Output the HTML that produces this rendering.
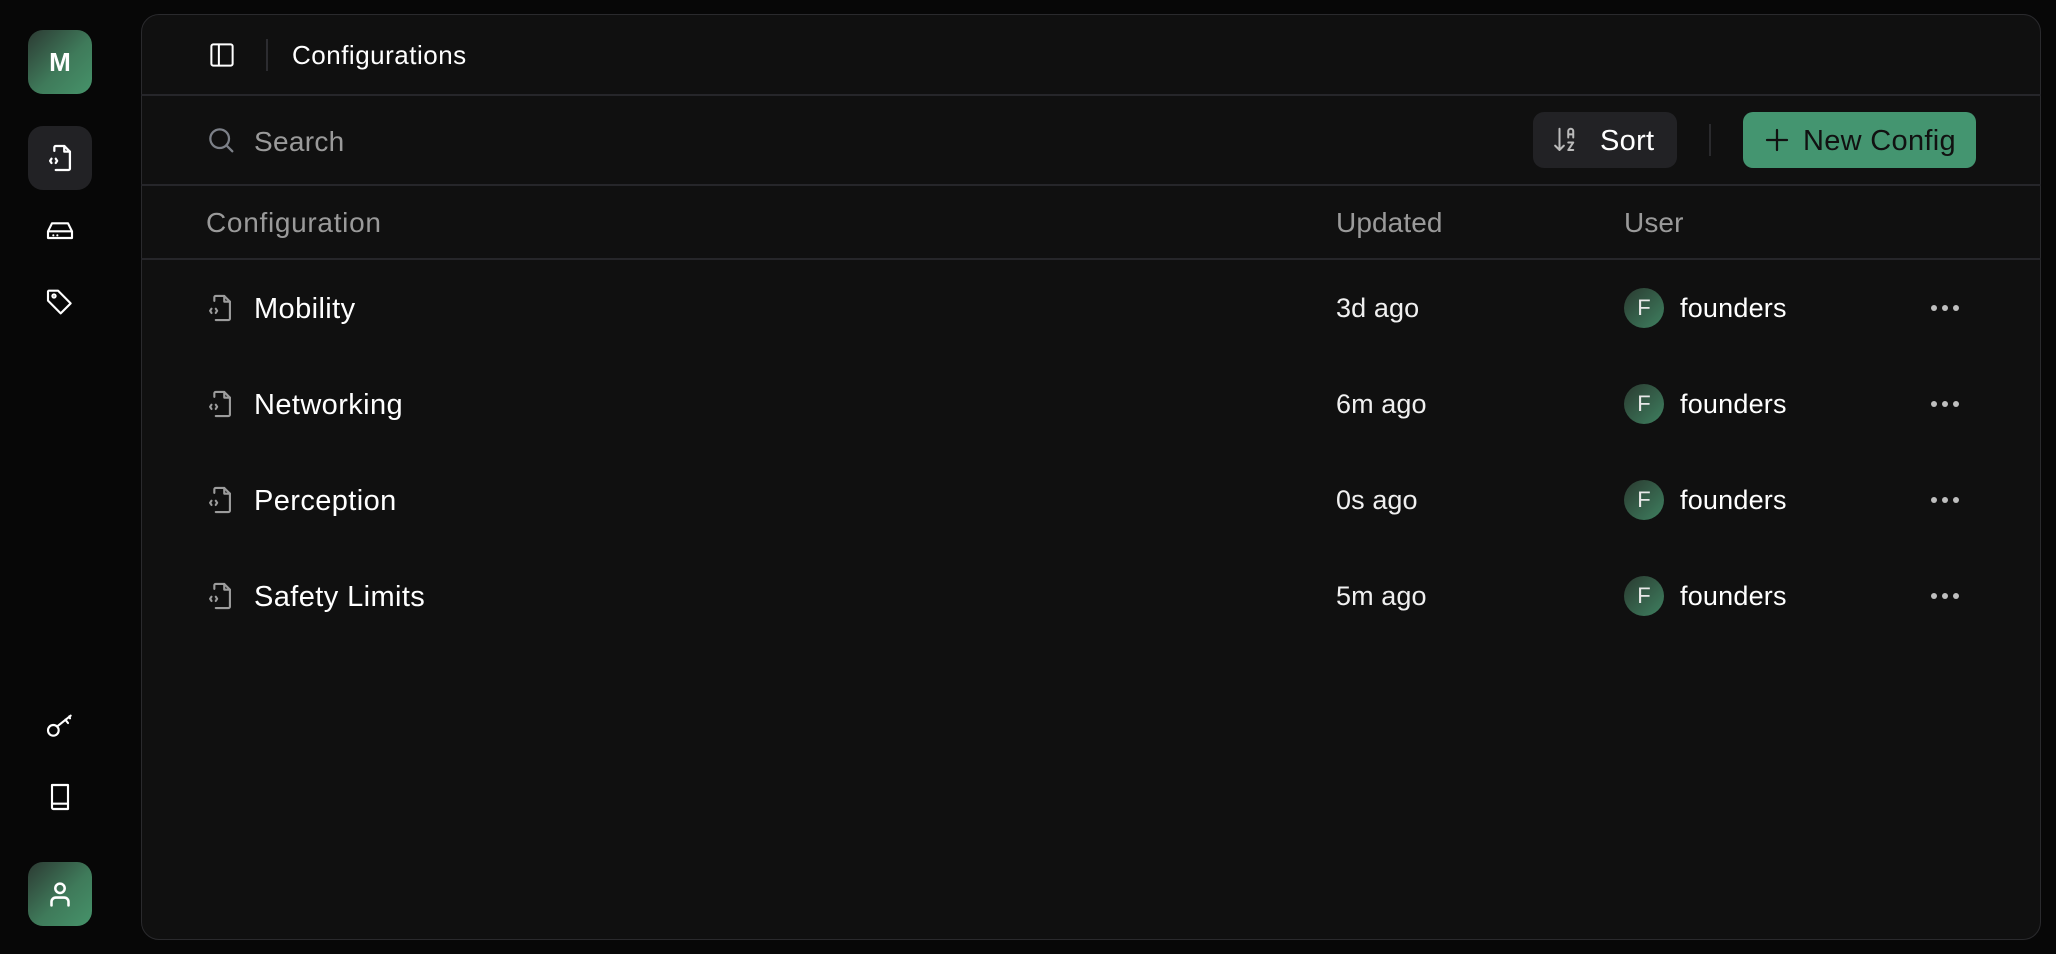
<!DOCTYPE html>
<html><head><meta charset="utf-8"><style>
*{margin:0;padding:0;box-sizing:border-box}
body{width:2056px;height:954px;background:#070707;font-family:"Liberation Sans",sans-serif;position:relative;overflow:hidden;color:#f2f2f2}
.abs{position:absolute}
.sb{left:28px;width:64px;height:64px;border-radius:15px;display:flex;align-items:center;justify-content:center}
.grad{background:linear-gradient(135deg,#2c3a33 0%,#3f7a5a 55%,#46936a 100%)}
.panel{left:141px;top:14px;width:1900px;height:926px;background:#101010;border:1.5px solid #2a2a2d;border-radius:18px}
.hl{left:141px;width:1900px;height:2px;background:#26262a}
.txt{position:absolute;white-space:nowrap;line-height:1}
.row-name{font-size:29px;color:#fff;letter-spacing:0.4px}
.upd{font-size:27px;color:#f0f0f0;letter-spacing:0.1px}
.av{position:absolute;width:40px;height:40px;border-radius:50%;background:linear-gradient(135deg,#2a3a30,#3f8060);color:#e8e8e8;font-size:22px;display:flex;align-items:center;justify-content:center}
.dots{position:absolute;display:flex;gap:5px}
.dots i{width:6px;height:6px;border-radius:50%;background:#bfbfbf;display:block}
svg{display:block}
</style></head><body>
<div class="abs sb grad" style="top:30px"><span style="font-size:26px;color:#fff;font-weight:bold">M</span></div>
<div class="abs sb" style="top:126px;background:#222225">
<svg width="34" height="34" viewBox="0 0 24 24" fill="none" stroke="#fff" stroke-width="1.6" stroke-linecap="round" stroke-linejoin="round"><path d="M8 7V4.5a1 1 0 0 1 1-1h6l4 4v12a1 1 0 0 1-1 1H9"/><path d="M15 3.5V7.5h4"/><path d="M6 12.5l-1 1.5 1 1.5M9 12.5l1 1.5-1 1.5"/></svg></div>
<div class="abs" style="left:44px;top:214px"><svg width="32" height="32" viewBox="0 0 24 24" fill="none" stroke="#fff" stroke-width="1.6" stroke-linejoin="round"><path d="M3 13l3-6h12l3 6v5H3z"/><path d="M3 13h18"/><path d="M7 16h.01M10 16h.01" stroke-linecap="round"/></svg></div>
<div class="abs" style="left:44px;top:286px"><svg width="32" height="32" viewBox="0 0 24 24" fill="none" stroke="#fff" stroke-width="1.6" stroke-linejoin="round"><path d="M3 4v7l9.5 9.5 7.5-7.5L10.5 3.5H3.5z"/><circle cx="7.5" cy="7.5" r="1.2"/></svg></div>
<div class="abs" style="left:44px;top:709px"><svg width="32" height="32" viewBox="0 0 24 24" fill="none" stroke="#fff" stroke-width="1.6" stroke-linecap="round"><circle cx="7" cy="16" r="4"/><path d="M10 13l10-8M16 8l2 2.5M19 5.5l.5 1.5"/></svg></div>
<div class="abs" style="left:44px;top:781px"><svg width="32" height="32" viewBox="0 0 24 24" fill="none" stroke="#fff" stroke-width="1.6" stroke-linejoin="round"><path d="M6 3h12v18H7a1 1 0 0 1-1-1z"/><path d="M6 17h12"/></svg></div>
<div class="abs sb grad" style="top:862px"><svg width="34" height="34" viewBox="0 0 24 24" fill="none" stroke="#fff" stroke-width="1.8" stroke-linecap="round"><circle cx="12" cy="8" r="3.3"/><path d="M6 20v-2.5a3 3 0 0 1 3-3h6a3 3 0 0 1 3 3V20"/></svg></div>

<div class="abs panel"></div>
<div class="abs" style="left:207px;top:40px"><svg width="30" height="30" viewBox="0 0 24 24" fill="none" stroke="#fff" stroke-width="1.6"><rect x="3.5" y="3.5" width="17" height="17" rx="1.5"/><path d="M9.5 3.5v17"/></svg></div>
<div class="abs" style="left:266px;top:39px;width:1.5px;height:32px;background:#2c2c30"></div>
<div class="txt" style="left:292px;top:42px;font-size:26px;color:#fff;letter-spacing:0.5px">Configurations</div>
<div class="abs hl" style="top:94px"></div>
<div class="abs" style="left:205px;top:124px"><svg width="32" height="32" viewBox="0 0 24 24" fill="none" stroke="#7c8088" stroke-width="1.7" stroke-linecap="round"><circle cx="11" cy="11" r="7"/><path d="M16 16l4.5 4.5"/></svg></div>
<div class="txt" style="left:254px;top:128px;font-size:28px;color:#9a9a9a;letter-spacing:0.3px">Search</div>
<div class="abs" style="left:1533px;top:112px;width:144px;height:56px;border-radius:11px;background:#222225"></div>
<div class="abs" style="left:1552px;top:125px"><svg width="30" height="30" viewBox="0 0 24 24" fill="none" stroke="#bbb" stroke-width="1.6" stroke-linecap="round" stroke-linejoin="round"><path d="M6 3v17M2.5 16.5 6 20l3.5-3.5"/><path d="M13 10V5a2 2 0 0 1 4 0v5M13 7.5h4M13 14h4l-4 6h4"/></svg></div>
<div class="txt" style="left:1600px;top:127px;font-size:29px;color:#fff;letter-spacing:0.3px">Sort</div>
<div class="abs" style="left:1709px;top:124px;width:2px;height:32px;background:#2a2a2d"></div>
<div class="abs" style="left:1743px;top:112px;width:233px;height:56px;border-radius:10px;background:#449570"></div>
<div class="abs" style="left:1762px;top:125px"><svg width="30" height="30" viewBox="0 0 24 24" fill="none" stroke="#111" stroke-width="1.8" stroke-linecap="round"><path d="M12 4v16M4 12h16"/></svg></div>
<div class="txt" style="left:1803px;top:127px;font-size:29px;color:#111;letter-spacing:0.3px">New Config</div>
<div class="abs hl" style="top:184px"></div>
<div class="txt" style="left:206px;top:209px;font-size:28px;color:#9a9a9a;letter-spacing:0.7px">Configuration</div>
<div class="txt" style="left:1336px;top:209px;font-size:28px;color:#9a9a9a;letter-spacing:0.1px">Updated</div>
<div class="txt" style="left:1624px;top:209px;font-size:28px;color:#9a9a9a;letter-spacing:0.1px">User</div>
<div class="abs hl" style="top:258px"></div>

<div id="rows"></div>
<script>
const rows=[["Mobility","3d ago",308],["Networking","6m ago",404],["Perception","0s ago",500],["Safety Limits","5m ago",596]];
let h="";
for(const [n,u,y] of rows){
h+=`<div class="abs" style="left:203px;top:${y-17}px"><svg width="34" height="34" viewBox="0 0 24 24" fill="none" stroke="#9c9c9c" stroke-width="1.5" stroke-linecap="round" stroke-linejoin="round"><path d="M8 7V4.5a1 1 0 0 1 1-1h6l4 4v12a1 1 0 0 1-1 1H9"/><path d="M15 3.5V7.5h4"/><path d="M6 12.5l-1 1.5 1 1.5M9 12.5l1 1.5-1 1.5"/></svg></div>
<div class="txt row-name" style="left:254px;top:${y-13}px">${n}</div>
<div class="txt upd" style="left:1336px;top:${y-13}px">${u}</div>
<div class="av" style="left:1624px;top:${y-20}px">F</div>
<div class="txt" style="left:1680px;top:${y-13}px;font-size:27px;color:#fff;letter-spacing:0.2px">founders</div>
<div class="dots" style="left:1931px;top:${y-3}px"><i></i><i></i><i></i></div>`;
}
document.getElementById("rows").innerHTML=h;
</script>
</body></html>
